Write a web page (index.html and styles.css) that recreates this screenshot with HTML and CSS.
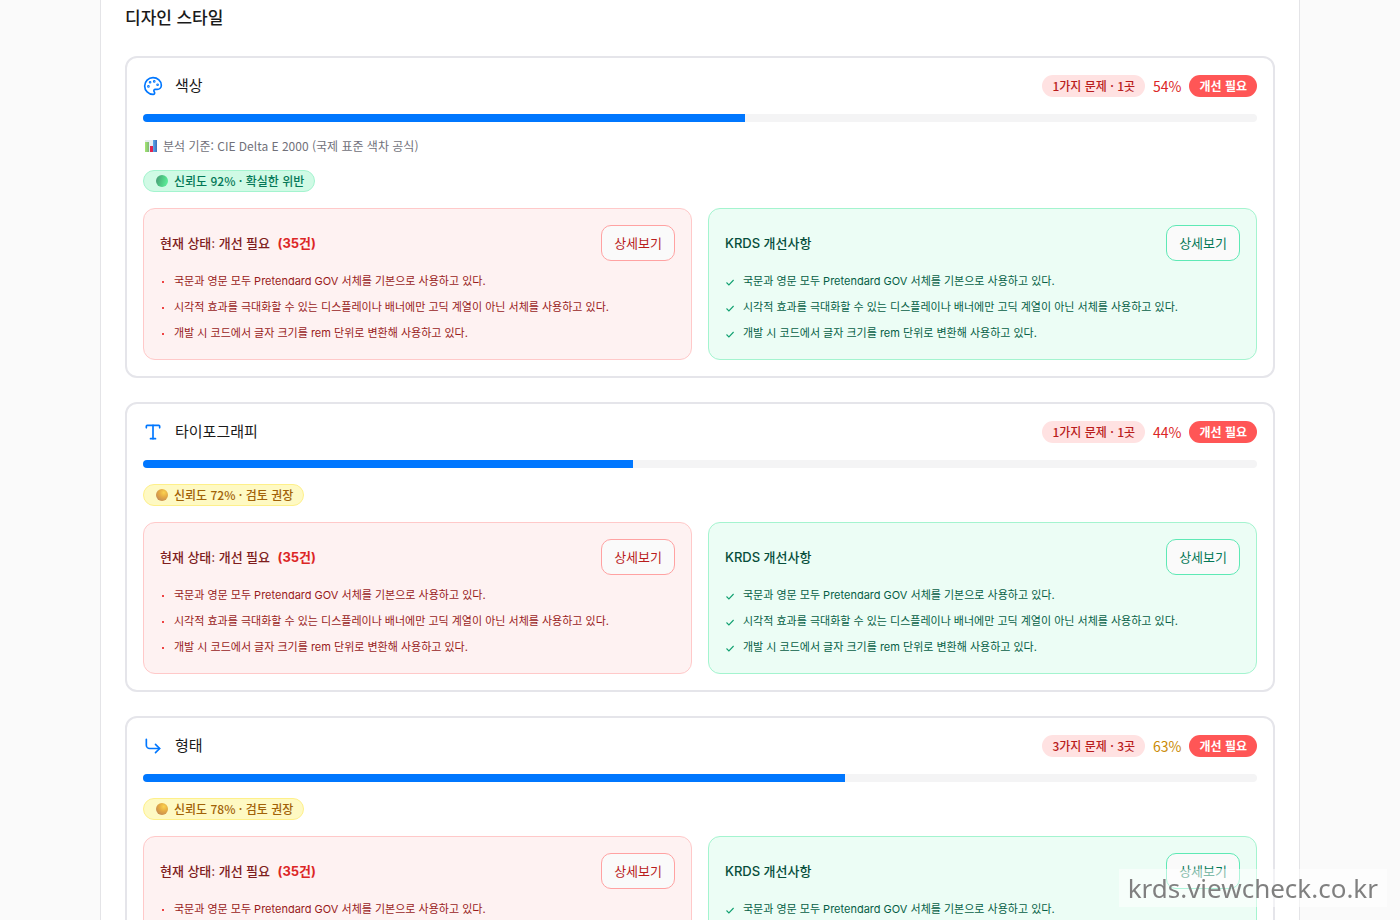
FILE: index.html
```html
<!DOCTYPE html>
<html lang="ko">

<head>
    <meta charset="UTF-8">
    <meta name="viewport" content="width=device-width, initial-scale=1.0">
    <title>디자인 스타일</title>
    <link rel="stylesheet" href="styles.css">
</head>

<body>
    <!-- Shared icons -->
    <svg class="icon-defs" width="0" height="0" aria-hidden="true">
        <defs>
            <linearGradient id="greenDot" x1="0" y1="0.3" x2="1" y2="0.6">
                <stop offset="0" stop-color="#4a9d78" />
                <stop offset="0.5" stop-color="#4fcb85" />
                <stop offset="1" stop-color="#5cf09a" />
            </linearGradient>
            <radialGradient id="yellowDot" cx="0.65" cy="0.3" r="0.75">
                <stop offset="0" stop-color="#fbd24e" />
                <stop offset="0.5" stop-color="#e5ab43" />
                <stop offset="1" stop-color="#c68c52" />
            </radialGradient>
            <linearGradient id="chartGreen" x1="0" y1="0" x2="1" y2="0">
                <stop offset="0" stop-color="#a5e86f" />
                <stop offset="1" stop-color="#7fb878" />
            </linearGradient>
            <linearGradient id="chartBlue" x1="0" y1="0" x2="1" y2="0">
                <stop offset="0" stop-color="#5aa9ee" />
                <stop offset="1" stop-color="#3a6db8" />
            </linearGradient>
            <symbol id="check" viewBox="0 0 10 10">
                <path d="M1.5 5.5 L3.9 7.9 L8.6 3" fill="none" stroke="currentColor" stroke-width="1.1" />
            </symbol>
        </defs>
    </svg>

    <main class="page">
        <h2 class="section-title">디자인 스타일</h2>

        <div class="card-list">
            <section class="card">
                <div class="card-header">
                    <svg class="card-icon" viewBox="0 0 24 24" aria-hidden="true">
                        <path d="M12 22a1 1 0 0 1 0-20 10 9 0 0 1 10 9 5 5 0 0 1-5 5h-2.25a1.75 1.75 0 0 0-1.4 2.8l.3.4a1.75 1.75 0 0 1-1.4 2.8z" />
                        <circle cx="13.5" cy="6.5" r=".6" />
                        <circle cx="17.5" cy="10.5" r=".6" />
                        <circle cx="6.5" cy="12.5" r=".6" />
                        <circle cx="8.5" cy="7.5" r=".6" />
                    </svg>
                    <h3 class="card-title">색상</h3>
                    <div class="card-status">
                        <span class="badge badge-issue">1가지 문제 · 1곳</span>
                        <span class="percent percent-low">54%</span>
                        <span class="badge badge-fix">개선 필요</span>
                    </div>
                </div>
                <div class="progress">
                    <div class="progress-bar" style="width: 54%"></div>
                </div>
                <p class="criteria">
                    <svg class="chart-icon" viewBox="0 0 16 16" aria-hidden="true">
                        <path d="M2 2h12v12H2z" fill="#e6edf0" />
                        <path d="M2 4h4v10H2z" fill="url(#chartGreen)" />
                        <path d="M7 8h3v6H7z" fill="#e0244f" />
                        <path d="M10 2h4v12h-4z" fill="url(#chartBlue)" />
                    </svg>
                    분석 기준: CIE Delta E 2000 (국제 표준 색차 공식)
                </p>
                <div class="confidence confidence-high">
                    <svg class="dot" viewBox="0 0 12 12" aria-hidden="true"><circle cx="6" cy="6" r="6" fill="url(#greenDot)" /></svg>
                    신뢰도 92% · 확실한 위반
                </div>
                <div class="panels">
                    <div class="panel panel-current">
                        <div class="panel-header">
                            <h4 class="panel-title">현재 상태: 개선 필요 <span class="count">(35건)</span></h4>
                            <button type="button" class="detail-btn">상세보기</button>
                        </div>
                        <ul class="panel-list">
                            <li><span class="bullet"></span>국문과 영문 모두 Pretendard GOV 서체를 기본으로 사용하고 있다.</li>
                            <li><span class="bullet"></span>시각적 효과를 극대화할 수 있는 디스플레이나 배너에만 고딕 계열이 아닌 서체를 사용하고 있다.</li>
                            <li><span class="bullet"></span>개발 시 코드에서 글자 크기를 rem 단위로 변환해 사용하고 있다.</li>
                        </ul>
                    </div>
                    <div class="panel panel-improve">
                        <div class="panel-header">
                            <h4 class="panel-title">KRDS 개선사항</h4>
                            <button type="button" class="detail-btn">상세보기</button>
                        </div>
                        <ul class="panel-list">
                            <li><svg class="check"><use href="#check" /></svg>국문과 영문 모두 Pretendard GOV 서체를 기본으로 사용하고 있다.</li>
                            <li><svg class="check"><use href="#check" /></svg>시각적 효과를 극대화할 수 있는 디스플레이나 배너에만 고딕 계열이 아닌 서체를 사용하고 있다.</li>
                            <li><svg class="check"><use href="#check" /></svg>개발 시 코드에서 글자 크기를 rem 단위로 변환해 사용하고 있다.</li>
                        </ul>
                    </div>
                </div>
            </section>

            <section class="card">
                <div class="card-header">
                    <svg class="card-icon" viewBox="0 0 24 24" aria-hidden="true">
                        <path d="M12 4v16" />
                        <path d="M4 7V5a1 1 0 0 1 1-1h14a1 1 0 0 1 1 1v2" />
                        <path d="M9 20h6" />
                    </svg>
                    <h3 class="card-title">타이포그래피</h3>
                    <div class="card-status">
                        <span class="badge badge-issue">1가지 문제 · 1곳</span>
                        <span class="percent percent-low">44%</span>
                        <span class="badge badge-fix">개선 필요</span>
                    </div>
                </div>
                <div class="progress">
                    <div class="progress-bar" style="width: 44%"></div>
                </div>
                <div class="confidence confidence-mid">
                    <svg class="dot" viewBox="0 0 12 12" aria-hidden="true"><circle cx="6" cy="6" r="6" fill="url(#yellowDot)" /></svg>
                    신뢰도 72% · 검토 권장
                </div>
                <div class="panels">
                    <div class="panel panel-current">
                        <div class="panel-header">
                            <h4 class="panel-title">현재 상태: 개선 필요 <span class="count">(35건)</span></h4>
                            <button type="button" class="detail-btn">상세보기</button>
                        </div>
                        <ul class="panel-list">
                            <li><span class="bullet"></span>국문과 영문 모두 Pretendard GOV 서체를 기본으로 사용하고 있다.</li>
                            <li><span class="bullet"></span>시각적 효과를 극대화할 수 있는 디스플레이나 배너에만 고딕 계열이 아닌 서체를 사용하고 있다.</li>
                            <li><span class="bullet"></span>개발 시 코드에서 글자 크기를 rem 단위로 변환해 사용하고 있다.</li>
                        </ul>
                    </div>
                    <div class="panel panel-improve">
                        <div class="panel-header">
                            <h4 class="panel-title">KRDS 개선사항</h4>
                            <button type="button" class="detail-btn">상세보기</button>
                        </div>
                        <ul class="panel-list">
                            <li><svg class="check"><use href="#check" /></svg>국문과 영문 모두 Pretendard GOV 서체를 기본으로 사용하고 있다.</li>
                            <li><svg class="check"><use href="#check" /></svg>시각적 효과를 극대화할 수 있는 디스플레이나 배너에만 고딕 계열이 아닌 서체를 사용하고 있다.</li>
                            <li><svg class="check"><use href="#check" /></svg>개발 시 코드에서 글자 크기를 rem 단위로 변환해 사용하고 있다.</li>
                        </ul>
                    </div>
                </div>
            </section>

            <section class="card">
                <div class="card-header">
                    <svg class="card-icon" viewBox="0 0 24 24" aria-hidden="true">
                        <path d="m15 10 5 5-5 5" />
                        <path d="M4 4v7a4 4 0 0 0 4 4h12" />
                    </svg>
                    <h3 class="card-title">형태</h3>
                    <div class="card-status">
                        <span class="badge badge-issue">3가지 문제 · 3곳</span>
                        <span class="percent percent-mid">63%</span>
                        <span class="badge badge-fix">개선 필요</span>
                    </div>
                </div>
                <div class="progress">
                    <div class="progress-bar" style="width: 63%"></div>
                </div>
                <div class="confidence confidence-mid">
                    <svg class="dot" viewBox="0 0 12 12" aria-hidden="true"><circle cx="6" cy="6" r="6" fill="url(#yellowDot)" /></svg>
                    신뢰도 78% · 검토 권장
                </div>
                <div class="panels">
                    <div class="panel panel-current">
                        <div class="panel-header">
                            <h4 class="panel-title">현재 상태: 개선 필요 <span class="count">(35건)</span></h4>
                            <button type="button" class="detail-btn">상세보기</button>
                        </div>
                        <ul class="panel-list">
                            <li><span class="bullet"></span>국문과 영문 모두 Pretendard GOV 서체를 기본으로 사용하고 있다.</li>
                        </ul>
                    </div>
                    <div class="panel panel-improve">
                        <div class="panel-header">
                            <h4 class="panel-title">KRDS 개선사항</h4>
                            <button type="button" class="detail-btn">상세보기</button>
                        </div>
                        <ul class="panel-list">
                            <li><svg class="check"><use href="#check" /></svg>국문과 영문 모두 Pretendard GOV 서체를 기본으로 사용하고 있다.</li>
                        </ul>
                    </div>
                </div>
            </section>
        </div>
    </main>

    <div class="site-tag">krds.viewcheck.co.kr</div>
</body>

</html>
```

FILE: styles.css
```css
* {
    margin: 0;
    padding: 0;
    box-sizing: border-box;
}

html {
    scrollbar-width: none;
}

body {
    font-family: Inter, 'Noto Sans CJK KR', sans-serif;
    background: #fafafa;
    color: #1a1a1a;
}

.icon-defs {
    position: absolute;
}

.page {
    max-width: 1200px;
    min-height: 100vh;
    margin: 0 auto;
    padding: 4px 24px 24px;
    background: #ffffff;
    border-left: 1px solid #e4e4e7;
    border-right: 1px solid #e4e4e7;
}

.section-title {
    margin-bottom: 24px;
    font-size: 17px;
    font-weight: 500;
    line-height: 28px;
}

.card-list {
    display: flex;
    flex-direction: column;
    gap: 24px;
}

.card {
    display: flex;
    flex-direction: column;
    gap: 16px;
    padding: 16px;
    border: 2px solid #e5e5ea;
    border-radius: 12px;
}

.card-header {
    display: flex;
    align-items: center;
    gap: 12px;
    height: 24px;
}

.card-icon {
    width: 20px;
    height: 20px;
    fill: none;
    stroke: #0077ff;
    stroke-width: 2;
    stroke-linecap: round;
    stroke-linejoin: round;
}

.card-title {
    font-size: 15px;
    font-weight: 400;
    line-height: 24px;
}

.card-status {
    display: flex;
    align-items: center;
    gap: 8px;
    margin-left: auto;
    font-family: 'Noto Sans CJK KR', sans-serif;
}

.badge {
    padding: 0 10px;
    border-radius: 11px;
    font-size: 12px;
    font-weight: 500;
    line-height: 22px;
}

.badge-issue {
    background: #ffe2e2;
    color: #b91c1c;
}

.badge-fix {
    background: #ff5656;
    color: #ffffff;
    font-weight: 700;
}

.percent {
    font-size: 14px;
    line-height: 20px;
}

.percent-low {
    color: #dc2626;
}

.percent-mid {
    color: #ca8a04;
}

.progress {
    height: 8px;
    border-radius: 4px;
    background: #f4f4f5;
    overflow: hidden;
}

.progress-bar {
    height: 100%;
    background: #0077ff;
}

.criteria {
    display: flex;
    align-items: center;
    gap: 4px;
    color: #71717a;
    font-family: 'Noto Sans CJK KR', sans-serif;
    font-size: 12px;
    line-height: 16px;
}

.chart-icon {
    width: 16px;
    height: 16px;
}

.confidence {
    display: flex;
    align-items: center;
    align-self: flex-start;
    gap: 6px;
    height: 22px;
    padding: 0 10px 0 12px;
    border: 1px solid;
    border-radius: 11px;
    font-family: 'Noto Sans CJK KR', sans-serif;
    font-size: 12px;
    font-weight: 500;
    line-height: 20px;
}

.confidence-high {
    background: #d0fae5;
    border-color: #a4f4cf;
    color: #047857;
}

.confidence-mid {
    background: #fef9c3;
    border-color: #fef08a;
    color: #a16207;
}

.dot {
    width: 12px;
    height: 12px;
}

.panels {
    display: grid;
    grid-template-columns: 1fr 1fr;
    gap: 16px;
}

.panel {
    padding: 16px;
    border: 1px solid;
    border-radius: 12px;
}

.panel-current {
    background: #fef2f2;
    border-color: #ffc9c9;
    color: #991b1b;
}

.panel-improve {
    background: #ecfdf5;
    border-color: #a4f4cf;
    color: #065f46;
}

.panel-header {
    display: flex;
    align-items: center;
    justify-content: space-between;
    margin-bottom: 10px;
}

.panel-title {
    font-size: 13px;
    font-weight: 500;
    line-height: 20px;
}

.panel-current .panel-title {
    color: #7f1d1d;
}

.panel-improve .panel-title {
    color: #064e3b;
}

.panel-title .count {
    margin-left: 4px;
    color: #dc2626;
    font-weight: 700;
}

.detail-btn {
    height: 36px;
    padding: 0 12px 2px;
    background: #fafafa;
    border: 1px solid;
    border-radius: 10px;
    font-family: inherit;
    font-size: 13px;
    font-weight: 400;
    cursor: pointer;
}

.panel-current .detail-btn {
    border-color: #ffa2a2;
    color: #b91c1c;
}

.panel-improve .detail-btn {
    border-color: #5ee9b5;
    color: #047857;
}

.panel-list {
    display: flex;
    flex-direction: column;
    gap: 6px;
    list-style: none;
    font-size: 11px;
    line-height: 20px;
}

.panel-list li {
    display: flex;
    align-items: center;
    white-space: nowrap;
}

.bullet {
    width: 2px;
    height: 2px;
    margin: 2px 10px 0 2px;
    background: #ef4444;
}

.check {
    width: 10px;
    height: 10px;
    margin: 2px 8px 0 0;
    color: #10a070;
}

/* Site address over the bottom corner */
.site-tag {
    position: fixed;
    right: 13px;
    bottom: 13px;
    padding: 0 9px;
    background: rgba(255, 255, 255, 0.5);
    color: #808080;
    font-family: 'Noto Sans', sans-serif;
    font-size: 26px;
    line-height: 38px;
}
```
